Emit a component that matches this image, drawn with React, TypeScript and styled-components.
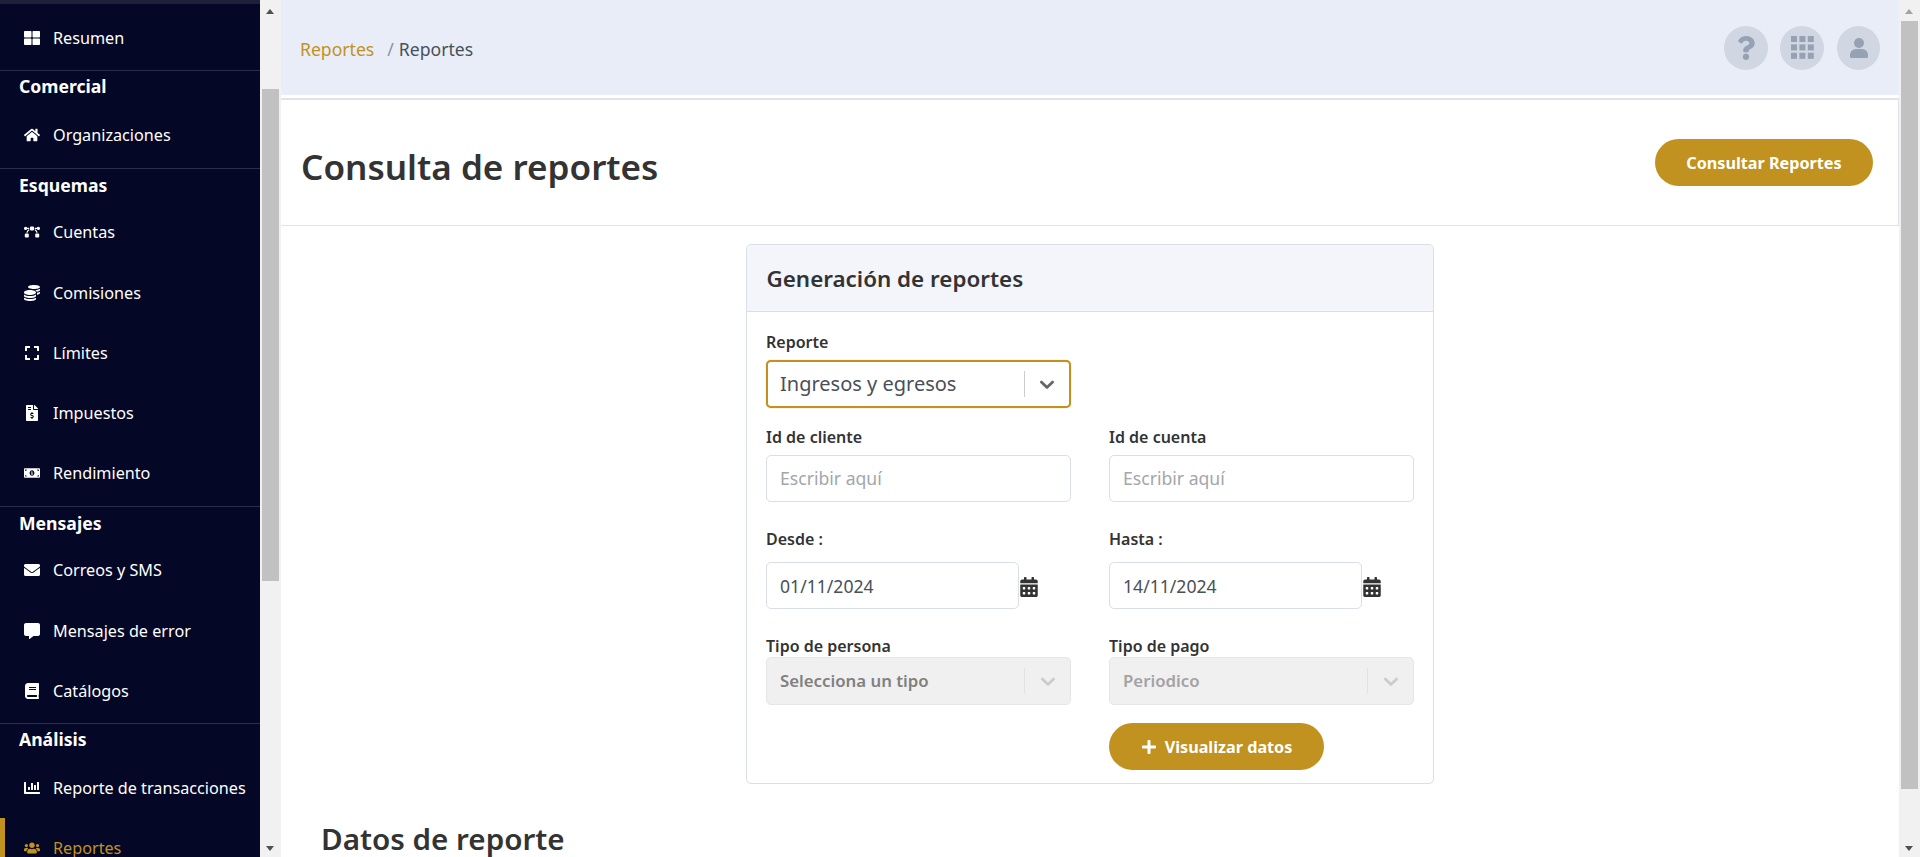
import React from 'react';
import styled, { createGlobalStyle } from 'styled-components';
import {
  FaBezierCurve,
  FaBook,
  FaCalendarAlt,
  FaChartBar,
  FaCoins,
  FaCommentAlt,
  FaEnvelope,
  FaExpand,
  FaFileInvoiceDollar,
  FaHome,
  FaMoneyBillAlt,
  FaPlus,
  FaQuestion,
  FaThLarge,
  FaUsers,
} from 'react-icons/fa';

const GOLD = '#c1921f';
const INK = '#333333';
const LINE = '#d9dee8';

const GlobalStyle = createGlobalStyle`
  html, body {
    margin: 0;
    height: 100%;
    overflow: hidden;
    background: #fff;
    font-family: "Noto Sans", "Open Sans", sans-serif;
  }
  * { box-sizing: border-box; }
`;

const Shell = styled.div`
  display: flex;
  height: 857px;
  width: 1920px;
  overflow: hidden;
`;

const Sidebar = styled.nav`
  width: 260px;
  flex: none;
  height: 857px;
  overflow: hidden;
  background: #040725;
  color: #fff;
  border-top: 4px solid #1d2038;
`;

const ScrollTrack = styled.div`
  width: 21px;
  flex: none;
  height: 857px;
  background: #f1f1f1;
  position: relative;
`;

const ScrollThumb = styled.div`
  position: absolute;
  top: ${(p) => p.$top}px;
  height: ${(p) => p.$height}px;
  left: 2px;
  width: 17px;
  background: #c1c1c1;
`;

const Arrow = styled.div`
  position: absolute;
  left: 6px;
  width: 0;
  height: 0;
  border-left: 4.5px solid transparent;
  border-right: 4.5px solid transparent;
  ${(p) =>
    p.$down
      ? `bottom: 6px; border-top: 5px solid ${p.$muted ? '#a3a3a3' : '#505050'};`
      : `top: 9px; border-bottom: 5px solid ${p.$muted ? '#a3a3a3' : '#505050'};`}
`;

const NavGroup = styled.div`
  border-bottom: 1px solid #2c2e49;
  padding-top: ${(p) => p.$top ?? 0}px;
  padding-bottom: ${(p) => p.$pad ?? 2}px;
`;

const NavHeading = styled.div`
  height: ${(p) => p.$height}px;
  padding: 0 0 ${(p) => p.$height - 32}px 19px;
  display: flex;
  align-items: center;
  font-size: 17.6px;
  font-weight: 700;
  line-height: 1;
`;

const NavItem = styled.div`
  height: 60.2px;
  display: flex;
  align-items: center;
  padding-left: 24px;
  gap: 13px;
  font-size: 16.2px;
  position: relative;
  color: ${(p) => (p.$active ? GOLD : '#fff')};
  ${(p) =>
    p.$active &&
    `&::before { content: ''; position: absolute; left: 0; top: 0; bottom: 0; width: 5px; background: ${GOLD}; }`}
`;

const NavIcon = styled.span`
  width: 16px;
  display: flex;
  justify-content: center;
  font-size: 16px;
  flex: none;
`;

const Main = styled.main`
  flex: 1;
  min-width: 0;
  height: 857px;
  overflow: hidden;
  background: #fff;
`;

const TopBar = styled.header`
  height: 95px;
  background: #e9edf7;
  display: flex;
  align-items: center;
  justify-content: space-between;
  padding: 0 19px 0 19px;
`;

const Crumbs = styled.div`
  display: flex;
  align-items: center;
  font-size: 17.6px;
  color: #495057;
  padding-top: 2px;
`;

const CrumbLink = styled.span`
  color: ${GOLD};
  margin-right: 13px;
`;

const CrumbSep = styled.span`
  color: #8a94a6;
  margin-right: 5px;
`;

const TopActions = styled.div`
  display: flex;
  gap: 12px;
`;

const RoundIcon = styled.div`
  width: 44px;
  height: 44px;
  border-radius: 50%;
  background: #d0d6e2;
  color: #96a1b4;
  display: flex;
  align-items: center;
  justify-content: center;
  font-size: 24px;

  &:last-child {
    width: 43px;
    margin-left: 1px;
  }
`;

const PageHead = styled.section`
  margin-top: 3px;
  height: 128px;
  border: 1px solid #e2e2ea;
  border-top-width: 2px;
  border-left: 0;
  display: flex;
  align-items: center;
  justify-content: space-between;
  padding: 0 25px 0 20px;
`;

const PageTitle = styled.h1`
  margin: 6px 0 0;
  font-size: 35.1px;
  font-weight: 600;
  color: ${INK};
`;

const GoldButton = styled.button`
  height: 47px;
  border: 0;
  border-radius: 24px;
  background: ${GOLD};
  color: #fff;
  font-family: inherit;
  font-size: 16.2px;
  font-weight: 700;
  display: flex;
  align-items: center;
  justify-content: center;
  gap: 8px;
  width: ${(p) => p.$width}px;
  padding: 0;
`;

const Card = styled.section`
  width: 688px;
  margin: 18px 0 0 465px;
  border: 1px solid ${LINE};
  border-radius: 5px;
  height: 540px;
`;

const CardHead = styled.div`
  height: 67px;
  background: #f4f5fa;
  border-bottom: 1px solid ${LINE};
  border-radius: 5px 5px 0 0;
  padding: 0 19.5px;
  display: flex;
  align-items: center;
`;

const CardTitle = styled.h2`
  margin: 0;
  font-size: 22.4px;
  font-weight: 600;
  color: ${INK};
`;

const FormGrid = styled.div`
  display: grid;
  grid-template-columns: 305px 305px;
  column-gap: 38px;
  padding: 18px 0 0 19px;
  align-content: start;
`;

const Field = styled.div`
  display: flex;
  flex-direction: column;
  height: ${(p) => p.$height}px;
  grid-column: ${(p) => (p.$wide ? '1 / 3' : 'auto')};
`;

const Label = styled.label`
  font-size: 16px;
  font-weight: 600;
  color: ${INK};
  line-height: 24px;
  margin-bottom: ${(p) => p.$gap ?? 6}px;
`;

const TextBox = styled.div`
  height: 47px;
  width: ${(p) => p.$width ?? 305}px;
  border: 1px solid ${LINE};
  border-radius: 5px;
  padding: 0 13px ${(p) => (p.$placeholder ? 1 : 0)}px;
  font-size: 17.6px;
  display: flex;
  align-items: center;
  color: ${(p) => (p.$placeholder ? '#a3a6ab' : '#495057')};
  background: #fff;
`;

const SelectBox = styled.div`
  height: 48px;
  width: 305px;
  border-radius: 5px;
  display: flex;
  align-items: center;
  ${(p) =>
    p.$disabled
      ? `padding-left: 13px; background: #f0f0f0; border: 1px solid #e6e6e6; font-size: 16.8px; font-weight: 600;`
      : `padding-left: 12px; background: #fff; border: 2px solid ${GOLD}; color: #495057; font-size: 20px; box-shadow: 0 0 1px ${GOLD};`}
`;

const SelectValue = styled.span`
  flex: 1;
  padding-bottom: 2px;
  color: ${(p) => p.$tone ?? 'inherit'};
`;

const SelectDivider = styled.span`
  width: 1px;
  height: 26px;
  background: ${(p) => (p.$disabled ? '#e2e2e2' : '#cccccc')};
`;

const SelectArrow = styled.span`
  width: ${(p) => (p.$disabled ? 45 : 44)}px;
  display: flex;
  justify-content: center;
  color: ${(p) => (p.$disabled ? '#cccccc' : '#666666')};
`;

const DateRow = styled.div`
  display: flex;
  align-items: center;
`;

const CalendarIcon = styled.span`
  color: ${INK};
  font-size: 20px;
  display: flex;
  margin-top: 2px;
`;

const SectionTitle = styled.h2`
  margin: 36px 0 0 40px;
  font-size: 29.6px;
  font-weight: 600;
  color: ${INK};
  line-height: 38px;
`;

const Chevron = () => (
  <svg width="24" height="24" viewBox="0 0 20 20" fill="currentColor">
    <path d="M4.516 7.548c0.436-0.446 1.043-0.481 1.576 0l3.908 3.747 3.908-3.747c0.533-0.481 1.141-0.446 1.574 0 0.436 0.445 0.408 1.197 0 1.615-0.406 0.418-4.695 4.502-4.695 4.502-0.217 0.223-0.502 0.335-0.787 0.335s-0.57-0.112-0.789-0.335c0 0-4.287-4.084-4.695-4.502s-0.436-1.17 0-1.615z" />
  </svg>
);

// 3x3 app launcher squares
const GridGlyph = () => (
  <svg width="23" height="23" viewBox="0 0 23 23" fill="currentColor">
    {[0, 8.4, 16.8].map((y) =>
      [0, 8.4, 16.8].map((x) => <rect key={`${x}-${y}`} x={x} y={y} width="6" height="6" />),
    )}
  </svg>
);

const UserGlyph = () => (
  <svg width="18" height="20" viewBox="0 0 18 20" fill="currentColor">
    <circle cx="9" cy="5" r="5" />
    <path d="M1.5 20A1.5 1.5 0 0 1 0 18.5V17a6 6 0 0 1 6-6h6a6 6 0 0 1 6 6v1.5a1.5 1.5 0 0 1-1.5 1.5z" />
  </svg>
);

const Select: React.FC<{ value: string; disabled?: boolean; tone?: string }> = ({
  value,
  disabled,
  tone,
}) => (
  <SelectBox $disabled={disabled}>
    <SelectValue $tone={tone}>{value}</SelectValue>
    <SelectDivider $disabled={disabled} />
    <SelectArrow $disabled={disabled}>
      <Chevron />
    </SelectArrow>
  </SelectBox>
);

const navGroups = [
  {
    top: 4,
    pad: 2,
    items: [{ icon: <FaThLarge />, label: 'Resumen' }],
  },
  {
    title: 'Comercial',
    head: 34,
    pad: 3,
    items: [{ icon: <FaHome />, label: 'Organizaciones' }],
  },
  {
    title: 'Esquemas',
    head: 33,
    pad: 3,
    items: [
      { icon: <FaBezierCurve />, label: 'Cuentas' },
      { icon: <FaCoins />, label: 'Comisiones' },
      { icon: <FaExpand />, label: 'Límites' },
      { icon: <FaFileInvoiceDollar />, label: 'Impuestos' },
      { icon: <FaMoneyBillAlt />, label: 'Rendimiento' },
    ],
  },
  {
    title: 'Mensajes',
    head: 33,
    pad: 2,
    items: [
      { icon: <FaEnvelope />, label: 'Correos y SMS' },
      { icon: <FaCommentAlt />, label: 'Mensajes de error' },
      { icon: <FaBook />, label: 'Catálogos' },
    ],
  },
  {
    title: 'Análisis',
    head: 34,
    pad: 2,
    items: [
      { icon: <FaChartBar />, label: 'Reporte de transacciones' },
      { icon: <FaUsers />, label: 'Reportes', active: true },
    ],
  },
];

export default function App() {
  return (
    <>
      <GlobalStyle />
      <Shell>
        <Sidebar>
          {navGroups.map((group, i) => (
            <NavGroup key={i} $top={group.top} $pad={group.pad}>
              {group.title && <NavHeading $height={group.head}>{group.title}</NavHeading>}
              {group.items.map((item) => (
                <NavItem key={item.label} $active={item.active}>
                  <NavIcon>{item.icon}</NavIcon>
                  {item.label}
                </NavItem>
              ))}
            </NavGroup>
          ))}
        </Sidebar>
        <ScrollTrack>
          <Arrow />
          <ScrollThumb $top={89} $height={492} />
          <Arrow $down />
        </ScrollTrack>

        <Main>
          <TopBar>
            <Crumbs>
              <CrumbLink>Reportes</CrumbLink>
              <CrumbSep>/</CrumbSep>
              Reportes
            </Crumbs>
            <TopActions>
              <RoundIcon>
                <FaQuestion />
              </RoundIcon>
              <RoundIcon>
                <GridGlyph />
              </RoundIcon>
              <RoundIcon>
                <UserGlyph />
              </RoundIcon>
            </TopActions>
          </TopBar>

          <PageHead>
            <PageTitle>Consulta de reportes</PageTitle>
            <GoldButton $width={218}>Consultar Reportes</GoldButton>
          </PageHead>

          <Card>
            <CardHead>
              <CardTitle>Generación de reportes</CardTitle>
            </CardHead>
            <FormGrid>
              <Field $height={95} $wide>
                <Label>Reporte</Label>
                <Select value="Ingresos y egresos" />
              </Field>
              <Field $height={102}>
                <Label>Id de cliente</Label>
                <TextBox $placeholder>Escribir aquí</TextBox>
              </Field>
              <Field $height={102}>
                <Label>Id de cuenta</Label>
                <TextBox $placeholder>Escribir aquí</TextBox>
              </Field>
              <Field $height={107}>
                <Label $gap={11}>Desde :</Label>
                <DateRow>
                  <TextBox $width={253}>01/11/2024</TextBox>
                  <CalendarIcon>
                    <FaCalendarAlt />
                  </CalendarIcon>
                </DateRow>
              </Field>
              <Field $height={107}>
                <Label $gap={11}>Hasta :</Label>
                <DateRow>
                  <TextBox $width={253}>14/11/2024</TextBox>
                  <CalendarIcon>
                    <FaCalendarAlt />
                  </CalendarIcon>
                </DateRow>
              </Field>
              <Field $height={89}>
                <Label $gap={-1}>Tipo de persona</Label>
                <Select value="Selecciona un tipo" disabled tone="#808080" />
              </Field>
              <Field $height={89}>
                <Label $gap={-1}>Tipo de pago</Label>
                <Select value="Periodico" disabled tone="#a3a3a3" />
              </Field>
              <span />
              <GoldButton $width={215}>
                <FaPlus size={16} />
                Visualizar datos
              </GoldButton>
            </FormGrid>
          </Card>

          <SectionTitle>Datos de reporte</SectionTitle>
        </Main>
        <ScrollTrack>
          <Arrow $muted />
          <ScrollThumb $top={21} $height={768} />
          <Arrow $down />
        </ScrollTrack>
      </Shell>
    </>
  );
}
